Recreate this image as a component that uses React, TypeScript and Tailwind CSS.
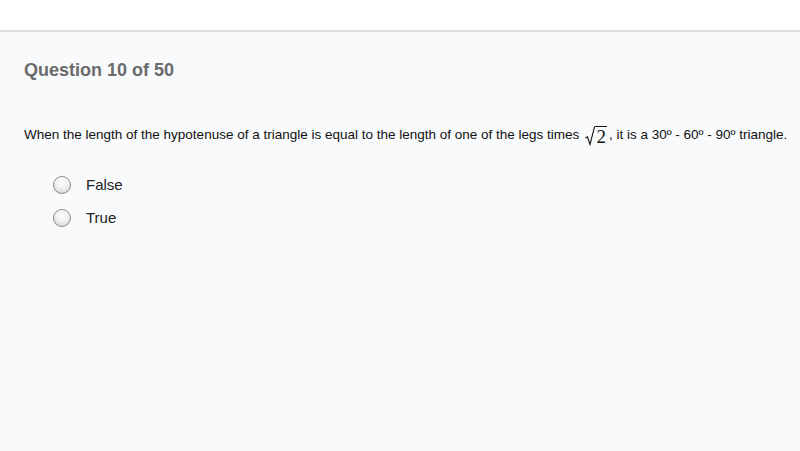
import React from "react";

function Radio() {
  return (
    <span className="inline-block shrink-0 w-[18px] h-[18px] rounded-full border border-[#8a8a8a] bg-[radial-gradient(circle_at_50%_35%,#ffffff_0%,#f0f0f0_45%,#cfcfcf_100%)] shadow-[inset_0_1px_1px_rgba(255,255,255,0.8)]" />
  );
}

export default function App() {
  return (
    <div className="w-[800px] h-[451px] overflow-hidden bg-[#f9fafc] flex flex-col font-['Liberation_Sans',Arial,sans-serif]">
      <div className="h-[32px] bg-white border-b-2 border-[#dcdcdc] shrink-0" />
      <div className="px-[24px] pt-[27px]">
        <h1 className="text-[18px] leading-[22px] font-bold text-[#6a6a6a]">Question 10 of 50</h1>
        <p className="mt-[43px] h-[22px] text-[13.5px] leading-[20px] text-[#111] whitespace-nowrap flex items-center">
          <span>When the length of the hypotenuse of a triangle is equal to the length of one of the legs times</span>
          <span className="inline-flex items-end ml-[6px] mr-[2px] h-[22px]">
            <svg width="10" height="20" viewBox="0 0 10 20" className="block">
              <path d="M0.5 12 L2.5 10.8 L5 18.5 L9.5 1 L10 1" fill="none" stroke="#111" strokeWidth="1.1" />
            </svg>
            <span className="border-t-[1.2px] border-[#111] font-['Liberation_Serif',serif] text-[19px] leading-[19px] px-[1px] mt-[1px]">2</span>
          </span>
          <span>, it is a 30º - 60º - 90º triangle.</span>
        </p>
        <div className="mt-[30px] pl-[29px] flex flex-col gap-[15px]">
          <label className="flex items-center gap-[15px] h-[18px] text-[15px] leading-[18px] text-[#222]">
            <Radio />
            <span>False</span>
          </label>
          <label className="flex items-center gap-[15px] h-[18px] text-[15px] leading-[18px] text-[#222]">
            <Radio />
            <span>True</span>
          </label>
        </div>
      </div>
    </div>
  );
}
